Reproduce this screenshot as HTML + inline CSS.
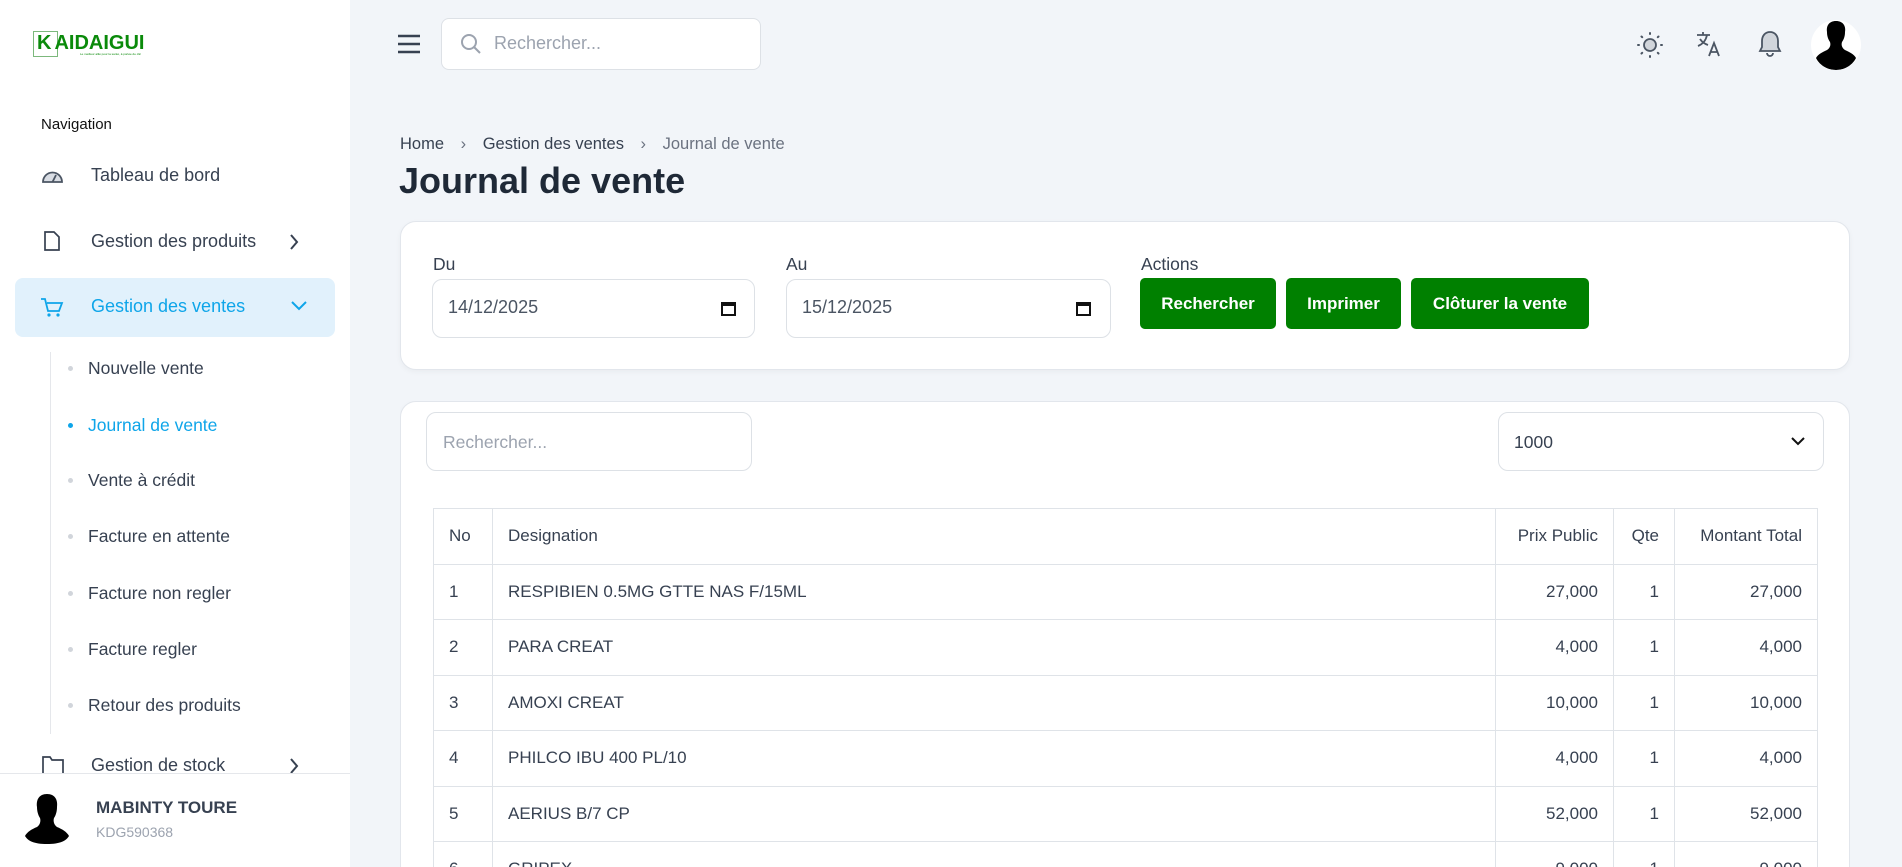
<!DOCTYPE html>
<html style="overflow:hidden;height:867px"><head><meta charset="utf-8"><style>
*{box-sizing:border-box;margin:0;padding:0}
body{width:1902px;height:867px;overflow:hidden;background:#f2f5f9;font-family:"Liberation Sans",sans-serif;color:#1f2937;position:relative}
.abs{position:absolute}
.side{left:0;top:0;width:350px;height:867px;background:#fff}
.nav{left:91px;font-size:18px;color:#374151}
.sub{left:88px;font-size:17.5px;color:#374151}
.dot{left:68px;width:5px;height:5px;border-radius:50%;background:#d1d5db}
.card{background:#fff;border:1px solid #e2e6ec;border-radius:16px;box-shadow:0 2px 6px rgba(0,0,0,.04)}
.inp{background:#fff;border:1px solid #dde1e6;border-radius:10px;font-size:18px;color:#4b5563}
.btn{background:#008000;color:#fff;font-weight:bold;font-size:17px;border-radius:5px;display:flex;align-items:center;justify-content:center;top:278px;height:51px}
table{border-collapse:collapse;position:absolute;left:433px;top:508px;width:1385px;font-size:17px;color:#374151}
td,th{border:1px solid #dfe3e8;height:55.5px;padding:0 15px;font-weight:normal;text-align:left}
.r{text-align:right}
</style></head><body>
<div class="abs side"></div>
<div class="abs" style="left:33px;top:31px;width:25px;height:26px;border:1px solid #7cb87c"></div>
<div class="abs" style="left:37px;top:32px;font-size:20px;font-weight:bold;color:#0a8a0a">K<span style="margin-left:3px">AIDAIGUI</span></div>
<div class="abs" style="left:80px;top:52px;font-size:3px;color:#0a8a0a">Le meilleur allié pour la santé, à portée de clic</div>
<div class="abs" style="left:41px;top:116px;font-size:15px;color:#111">Navigation</div>
<svg class="abs" style="left:41px;top:167px" width="23" height="17" viewBox="0 0 23 17"><path d="M2 15A9.5 9.5 0 0 1 21 15Z" fill="#d9dde4" stroke="#4b5563" stroke-width="1.8"/><path d="M11.5 15L15 8" stroke="#4b5563" stroke-width="1.8"/></svg>
<div class="abs nav" style="top:165px">Tableau de bord</div>
<svg class="abs" style="left:43px;top:230px" width="18" height="22" viewBox="0 0 18 22"><path d="M2 2h9l5 5v13H2z" fill="none" stroke="#374151" stroke-width="1.7"/></svg>
<div class="abs nav" style="top:231px">Gestion des produits</div>
<svg class="abs" style="left:288px;top:233px" width="12" height="18"><path d="M3 2l6 7-6 7" fill="none" stroke="#374151" stroke-width="2"/></svg>
<div class="abs" style="left:15px;top:278px;width:320px;height:59px;background:#e1f1fc;border-radius:8px"></div>
<svg class="abs" style="left:40px;top:297px" width="24" height="22" viewBox="0 0 24 22"><path d="M1 2h4l3 12h11l3-8H7" fill="none" stroke="#0ea5e9" stroke-width="1.8"/><circle cx="9" cy="18" r="1.6" fill="#0ea5e9"/><circle cx="18" cy="18" r="1.6" fill="#0ea5e9"/></svg>
<div class="abs nav" style="top:296px;color:#0ea5e9">Gestion des ventes</div>
<svg class="abs" style="left:290px;top:300px" width="18" height="12"><path d="M2 2l7 7 7-7" fill="none" stroke="#0ea5e9" stroke-width="2"/></svg>
<div class="abs" style="left:50px;top:352px;width:1px;height:382px;background:#e5e7eb"></div>
<div class="abs dot" style="top:366px"></div><div class="abs sub" style="top:358px">Nouvelle vente</div>
<div class="abs dot" style="top:423px;background:#0ea5e9"></div><div class="abs sub" style="top:415px;color:#0ea5e9">Journal de vente</div>
<div class="abs dot" style="top:478px"></div><div class="abs sub" style="top:470px">Vente à crédit</div>
<div class="abs dot" style="top:534px"></div><div class="abs sub" style="top:526px">Facture en attente</div>
<div class="abs dot" style="top:591px"></div><div class="abs sub" style="top:583px">Facture non regler</div>
<div class="abs dot" style="top:647px"></div><div class="abs sub" style="top:639px">Facture regler</div>
<div class="abs dot" style="top:703px"></div><div class="abs sub" style="top:695px">Retour des produits</div>
<svg class="abs" style="left:42px;top:756px" width="22" height="18"><path d="M1 17V1h7l2 3h11v13" fill="none" stroke="#374151" stroke-width="1.7"/></svg>
<div class="abs nav" style="top:755px">Gestion de stock</div>
<svg class="abs" style="left:288px;top:757px" width="12" height="18"><path d="M3 2l6 7-6 7" fill="none" stroke="#374151" stroke-width="2"/></svg>
<div class="abs" style="left:0;top:773px;width:350px;height:94px;background:#fff;border-top:1px solid #e5e7eb"></div>
<svg class="abs" style="left:25px;top:793px" width="45" height="56" viewBox="0 0 45 56"><path d="M22 1c-8 0-11 6-10 13 0 4 1 8 3 11 1 3 0 7-3 9-5 2-10 5-12 9 3 5 9 8 22 8s19-3 22-8c-2-4-7-7-12-9-3-2-4-6-3-9 2-3 3-7 3-11 1-7-2-13-10-13z" fill="#000"/></svg>
<div class="abs" style="left:96px;top:798px;font-size:17px;font-weight:bold;color:#374151">MABINTY TOURE</div>
<div class="abs" style="left:96px;top:824px;font-size:14px;color:#9ca3af">KDG590368</div>

<svg class="abs" style="left:397px;top:33px" width="24" height="22"><path d="M1 3h22M1 11h22M1 19h22" stroke="#374151" stroke-width="2.4"/></svg>
<div class="abs inp" style="left:441px;top:18px;width:320px;height:52px;border-radius:8px"></div>
<svg class="abs" style="left:460px;top:33px" width="22" height="22"><circle cx="9" cy="9" r="7" fill="none" stroke="#9ca3af" stroke-width="2"/><path d="M14 14l6 6" stroke="#9ca3af" stroke-width="2"/></svg>
<div class="abs" style="left:494px;top:33px;font-size:18px;color:#9ca3af">Rechercher...</div>
<svg class="abs" style="left:1636px;top:31px" width="28" height="28" viewBox="0 0 28 28"><circle cx="14" cy="14" r="6" fill="#d1d5db" stroke="#4b5563" stroke-width="1.8"/><g stroke="#4b5563" stroke-width="2" stroke-linecap="round"><path d="M14 2v1M14 25v1M2 14h1M25 14h1M5.5 5.5l.7.7M21.8 21.8l.7.7M5.5 22.5l.7-.7M21.8 6.2l.7-.7"/></g></svg>
<svg class="abs" style="left:1696px;top:31px" width="28" height="26" viewBox="0 0 28 26"><g fill="none" stroke="#4b5563" stroke-width="1.8"><path d="M1 4h13M7 1v3M11 4c-1 5-4 9-9 11M4 8c2 3 5 5 8 6M13 25l5-13 5 13M15 21h6"/></g></svg>
<svg class="abs" style="left:1758px;top:30px" width="24" height="28" viewBox="0 0 24 28"><path d="M12 2c-5 0-8 4-8 9v6l-2 4h20l-2-4v-6c0-5-3-9-8-9z" fill="#d1d5db" stroke="#4b5563" stroke-width="1.8"/><path d="M9 23a3 3 0 0 0 6 0" fill="none" stroke="#4b5563" stroke-width="1.8"/></svg>
<div class="abs" style="left:1811px;top:20px;width:50px;height:50px;border-radius:50%;background:#fff;overflow:hidden"><svg width="50" height="50" viewBox="0 0 50 50"><path d="M25 1c-7 0-10 5-9 11 0 4 1 7 3 10 1 3 0 6-3 8-4 2-9 4-11 8 3 6 10 12 20 12s17-6 20-12c-2-4-7-6-11-8-3-2-4-5-3-8 2-3 3-6 3-10 1-6-2-11-9-11z" fill="#000"/></svg></div>

<div class="abs" style="left:400px;top:135px;font-size:16.5px;color:#374151">Home <span style="margin:0 12px;color:#6b7280">›</span> Gestion des ventes <span style="margin:0 12px;color:#6b7280">›</span> <span style="color:#6b7280">Journal de vente</span></div>
<div class="abs" style="left:399px;top:160px;font-size:36px;font-weight:bold;color:#1f2937">Journal de vente</div>

<div class="abs card" style="left:400px;top:221px;width:1450px;height:149px"></div>
<div class="abs" style="left:433px;top:254px;font-size:17.5px;color:#374151">Du</div>
<div class="abs inp" style="left:432px;top:279px;width:323px;height:59px"></div>
<div class="abs" style="left:448px;top:297px;font-size:18px;color:#4b5563">14/12/2025</div>
<svg class="abs" style="left:721px;top:300px" width="15" height="16"><rect x="1" y="3" width="13" height="12" fill="none" stroke="#111" stroke-width="2"/><rect x="1" y="3" width="13" height="3" fill="#111"/></svg>
<div class="abs" style="left:786px;top:254px;font-size:17.5px;color:#374151">Au</div>
<div class="abs inp" style="left:786px;top:279px;width:325px;height:59px"></div>
<div class="abs" style="left:802px;top:297px;font-size:18px;color:#4b5563">15/12/2025</div>
<svg class="abs" style="left:1076px;top:300px" width="15" height="16"><rect x="1" y="3" width="13" height="12" fill="none" stroke="#111" stroke-width="2"/><rect x="1" y="3" width="13" height="3" fill="#111"/></svg>
<div class="abs" style="left:1141px;top:254px;font-size:17.5px;color:#374151">Actions</div>
<div class="abs btn" style="left:1140px;width:136px">Rechercher</div>
<div class="abs btn" style="left:1286px;width:115px">Imprimer</div>
<div class="abs btn" style="left:1411px;width:178px">Clôturer la vente</div>

<div class="abs" style="left:400px;top:401px;width:1450px;height:466px;overflow:hidden">
<div class="abs card" style="left:0;top:0;width:1450px;height:520px"></div>
</div>
<div class="abs inp" style="left:426px;top:412px;width:326px;height:59px"></div>
<div class="abs" style="left:443px;top:432px;font-size:17.5px;color:#9ca3af">Rechercher...</div>
<div class="abs inp" style="left:1498px;top:412px;width:326px;height:59px"></div>
<div class="abs" style="left:1514px;top:432px;font-size:17.5px;color:#374151">1000</div>
<svg class="abs" style="left:1790px;top:436px" width="16" height="11"><path d="M2 2l6 6 6-6" fill="none" stroke="#111" stroke-width="2"/></svg>
<div class="abs" style="left:0;top:0;width:1902px;height:867px;overflow:hidden;pointer-events:none">
<table>
<tr><th style="width:59px">No</th><th>Designation</th><th class="r" style="width:118px">Prix Public</th><th class="r" style="width:61px">Qte</th><th class="r" style="width:143px">Montant Total</th></tr>
<tr><td>1</td><td>RESPIBIEN 0.5MG GTTE NAS F/15ML</td><td class="r">27,000</td><td class="r">1</td><td class="r">27,000</td></tr>
<tr><td>2</td><td>PARA CREAT</td><td class="r">4,000</td><td class="r">1</td><td class="r">4,000</td></tr>
<tr><td>3</td><td>AMOXI CREAT</td><td class="r">10,000</td><td class="r">1</td><td class="r">10,000</td></tr>
<tr><td>4</td><td>PHILCO IBU 400 PL/10</td><td class="r">4,000</td><td class="r">1</td><td class="r">4,000</td></tr>
<tr><td>5</td><td>AERIUS B/7 CP</td><td class="r">52,000</td><td class="r">1</td><td class="r">52,000</td></tr>
<tr><td>6</td><td>GRIPEX</td><td class="r">9,000</td><td class="r">1</td><td class="r">9,000</td></tr>
</table>
</div>
</body></html>
